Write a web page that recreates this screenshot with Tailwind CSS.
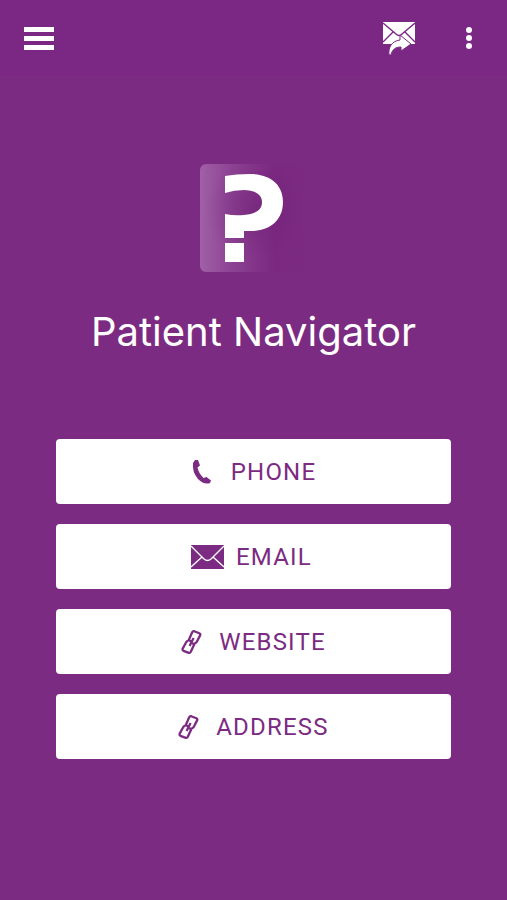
<!DOCTYPE html>
<html lang="en">
<head>
<meta charset="utf-8">
<meta name="viewport" content="width=device-width, initial-scale=1">
<title>Patient Navigator</title>
<script src="https://cdn.jsdelivr.net/npm/@tailwindcss/browser@4"></script>
</head>
<body class="min-h-screen bg-[#7c2b82] font-[Roboto,sans-serif] text-white">
<svg class="hidden" aria-hidden="true">
  <symbol id="chain" viewBox="0 0 22 26">
    <g fill="none" stroke="currentColor" stroke-width="2.3" stroke-linejoin="round">
      <path d="M10.500 12.500 L7.700 11.200 L11.200 3.200 Q11.900 1.800 13.200 2.200 L18.300 4.200 Q19.800 4.900 19.100 6.400 L15.700 13 Q15 14.300 13.300 14"/>
      <path d="M11 14 L13.300 15.200 L9.800 22.800 Q9.100 24.200 7.800 23.800 L2.500 21.800 Q1 21.100 1.700 19.600 L5.300 13 Q6 11.700 7.400 12"/>
      <path d="M12.600 9 L8.600 17"/>
    </g>
  </symbol>
</svg>
<header class="flex h-19 items-center justify-between bg-[#7a2883] px-6">
  <button type="button" aria-label="Open menu">
    <svg class="block" width="30" height="24" fill="#fff"><path d="M0 1h30v5H0zM0 10h30v5H0zM0 19h30v5H0z"/></svg>
  </button>
  <div class="flex items-center gap-10">
    <button type="button" aria-label="Share by email">
      <svg class="block" width="34" height="34" viewBox="0 0 34 34">
        <path fill="#fff" d="M2 1h32v22H2z"/>
        <path d="M2 2 15 13Q18 16 21 13L34 2M2 21 12 11M34 21 24 11" fill="none" stroke="#7a2883" stroke-width="1.4"/>
        <path d="M8 34C7 26 11 20 19 19V14L30 23 20 30V26C14 26 11 29 10 34Z" fill="#fff" stroke="#7a2883" stroke-width="1"/>
      </svg>
    </button>
    <button type="button" aria-label="More options" class="px-2">
      <svg class="block" width="12" height="24" fill="#fff"><circle cx="6" cy="4" r="3"/><circle cx="6" cy="12" r="3"/><circle cx="6" cy="20" r="3"/></svg>
    </button>
  </div>
</header>
<main class="px-14 pt-22">
  <svg class="mx-auto block" width="108" height="108" viewBox="0 0 108 108" role="img" aria-label="Patient Navigator logo">
    <defs>
      <linearGradient id="fade"><stop offset="0" stop-color="#a060a6"/><stop offset=".3" stop-color="#8c4292"/><stop offset=".7" stop-color="#7a2880"/><stop offset="1" stop-color="#7a2880" stop-opacity="0"/></linearGradient>
      <radialGradient id="shade" cx=".5" cy=".42" r=".45"><stop offset="0" stop-color="#6c1b72" stop-opacity=".4"/><stop offset="1" stop-color="#6c1b72" stop-opacity="0"/></radialGradient>
    </defs>
    <rect width="108" height="108" rx="6" fill="url(#fade)"/>
    <rect width="108" height="108" rx="6" fill="url(#shade)"/>
    <path fill="#fff" d="M25 12Q36 10 50 10C71 10 83 21 83 38C83 56 70 67 51 67H44V74H25V50Q34 52 44 51C56 50 62 46 62 38C62 30 54 26 44 26Q34 26 25 29ZM25 79H44V98H25Z"/>
  </svg>
  <h1 class="mt-8 text-center font-[Inter,sans-serif] text-[40px] leading-14">Patient Navigator</h1>
  <nav class="mt-[79px] flex flex-col gap-5 text-2xl tracking-wider text-[#7c2b82]" aria-label="Contact">
    <button type="button" class="flex h-[65px] items-center justify-center gap-4 rounded-sm bg-white">
      <svg width="24" height="26" viewBox="0 0 24 26" fill="currentColor"><path d="M4 1 7 1 9 6.500 6.500 8.500Q7.500 14 12.500 19L15.500 18 20 21.500 19 24Q13 26 7 20Q1 13 2 4Z"/></svg>
      <span class="uppercase">Phone</span>
    </button>
    <button type="button" class="flex h-[65px] items-center justify-center gap-3 rounded-sm bg-white pr-1">
      <svg width="33" height="24" viewBox="0 0 33 24"><path fill="currentColor" d="M0 0h33v24H0z"/><path d="M0 1 13 14Q16.5 17 20 14L33 1M0 22 11 12M33 22 22 12" fill="none" stroke="#fff" stroke-width="1.3"/></svg>
      <span class="uppercase">Email</span>
    </button>
    <button type="button" class="flex h-[65px] items-center justify-center gap-4 rounded-sm bg-white">
      <svg width="22" height="26"><use href="#chain"/></svg>
      <span class="uppercase">Website</span>
    </button>
    <button type="button" class="flex h-[65px] items-center justify-center gap-4 rounded-sm bg-white">
      <svg width="22" height="26"><use href="#chain"/></svg>
      <span class="uppercase">Address</span>
    </button>
  </nav>
</main>
</body>
</html>
